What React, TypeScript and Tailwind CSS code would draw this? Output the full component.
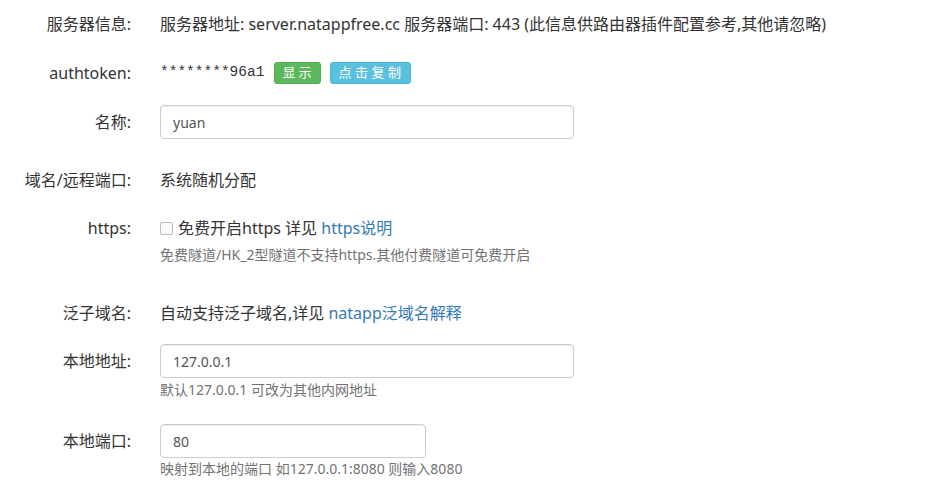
const font = { fontFamily: '"Noto Sans", "Noto Sans CJK SC", sans-serif' };

function Row({ label, children, className = "" }: { label: string; children: React.ReactNode; className?: string }) {
    return (
        <div className={`flex items-start ${className}`}>
            <div className="w-[131px] shrink-0 text-right leading-[34px]">{label}</div>
            <div className="ml-[29px] flex-1">{children}</div>
        </div>
    );
}

export default function App() {
    return (
        <div className="w-[933px] h-[493px] bg-white text-[#333] text-[16px] pt-[7px] overflow-hidden" style={font}>
            <Row label="服务器信息:">
                <div className="leading-[34px] whitespace-nowrap">
                    服务器地址: server.natappfree.cc 服务器端口: 443 (此信息供路由器插件配置参考,其他请忽略)
                </div>
            </Row>

            <Row label="authtoken:" className="mt-[15px]">
                <div className="flex items-center h-[34px]">
                    <span className="font-['Liberation_Mono',monospace] text-[14.5px] mr-[10px]">********96a1</span>
                    <span className="bg-[#5cb85c] text-white text-[13px] rounded-[3px] h-[22px] pl-[7px] pr-[6px] flex items-center tracking-[3px] border border-[#4cae4c] mr-[9px]">显示</span>
                    <span className="bg-[#5bc0de] text-white text-[13px] rounded-[3px] h-[22px] pl-[7px] pr-[6px] flex items-center tracking-[3.5px] border border-[#46b8da]">点击复制</span>
                </div>
            </Row>

            <Row label="名称:" className="mt-[15px]">
                <input
                    readOnly
                    value="yuan"
                    className="w-[414px] h-[34px] border border-[#ccc] rounded-[4px] px-[12px] text-[14px] text-[#555] shadow-[inset_0_1px_1px_rgba(0,0,0,0.075)] outline-none"
                    style={font}
                />
            </Row>

            <Row label="域名/远程端口:" className="mt-[24px]">
                <div className="leading-[34px]">系统随机分配</div>
            </Row>

            <Row label="https:" className="mt-[14px]">
                <div className="flex items-center h-[34px]">
                    <span className="w-[13px] h-[13px] border border-[#bbb] rounded-[2px] bg-[#fafafa] mr-[5px]"></span>
                    <span>免费开启https 详见 <span className="text-[#337ab7]">https说明</span></span>
                </div>
                <div className="text-[14px] text-[#737373] leading-[20px]">免费隧道/HK_2型隧道不支持https.其他付费隧道可免费开启</div>
            </Row>

            <Row label="泛子域名:" className="mt-[31px]">
                <div className="leading-[34px]">
                    自动支持泛子域名,详见 <span className="text-[#337ab7]">natapp泛域名解释</span>
                </div>
            </Row>

            <Row label="本地地址:" className="mt-[14px]">
                <input
                    readOnly
                    value="127.0.0.1"
                    className="w-[414px] h-[34px] border border-[#ccc] rounded-[4px] px-[12px] text-[14px] text-[#555] shadow-[inset_0_1px_1px_rgba(0,0,0,0.075)] outline-none"
                    style={font}
                />
                <div className="text-[14px] text-[#737373] leading-[20px] mt-[2px]">默认127.0.0.1 可改为其他内网地址</div>
            </Row>

            <Row label="本地端口:" className="mt-[24px]">
                <input
                    readOnly
                    value="80"
                    className="w-[266px] h-[34px] border border-[#ccc] rounded-[4px] px-[12px] text-[14px] text-[#555] shadow-[inset_0_1px_1px_rgba(0,0,0,0.075)] outline-none"
                    style={font}
                />
                <div className="text-[14px] text-[#737373] leading-[20px] mt-[1px]">映射到本地的端口 如127.0.0.1:8080 则输入8080</div>
            </Row>
        </div>
    );
}
